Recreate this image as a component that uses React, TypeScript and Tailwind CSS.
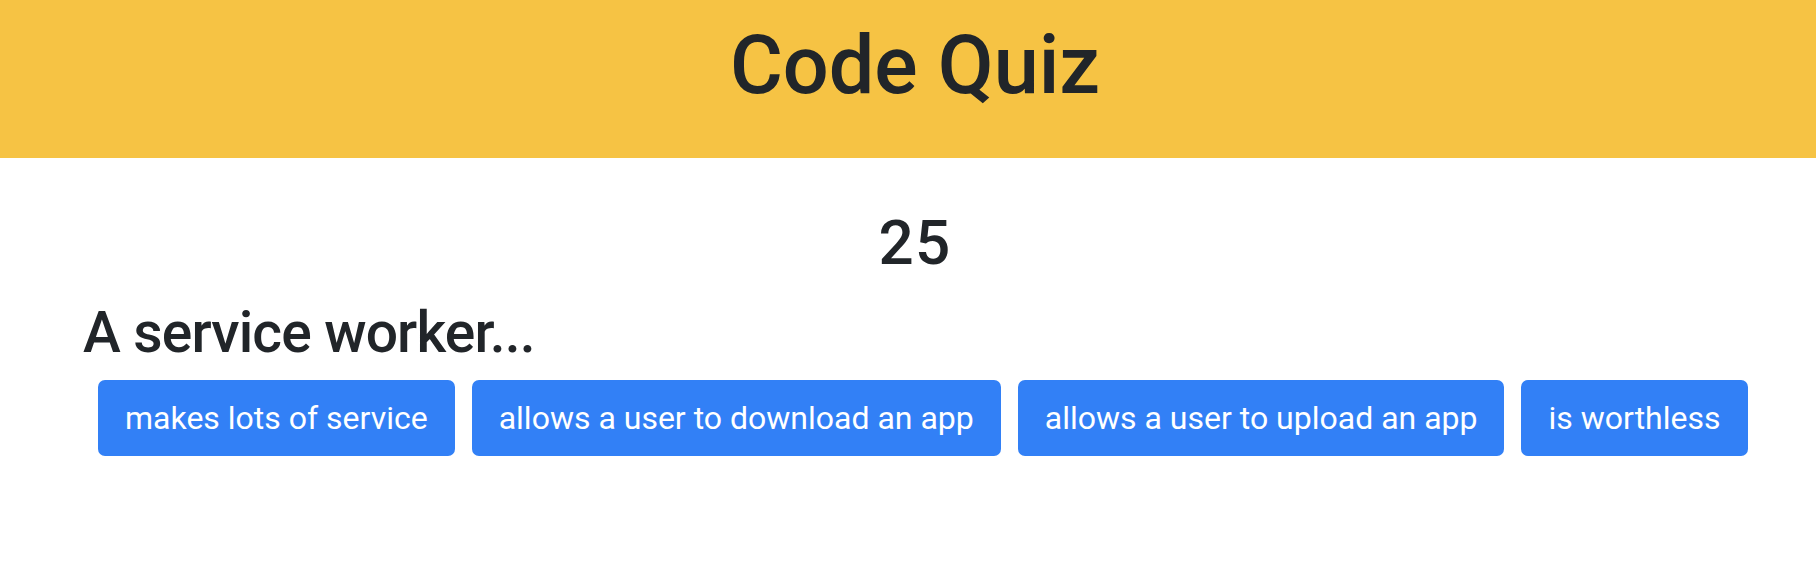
export default function App() {
  const answers = [
    "makes lots of service",
    "allows a user to download an app",
    "allows a user to upload an app",
    "is worthless",
  ];
  return (
    <div className="min-h-[576px] bg-white text-[#212529]" style={{ fontFamily: "Roboto, 'Noto Sans', sans-serif" }}>
      <header className="h-[158px] bg-[#f6c344] flex justify-center pt-[17px]">
        <h1 className="text-[81px] leading-[1.2] font-medium pl-[14px]">Code Quiz</h1>
      </header>
      <main className="px-[83px]">
        <div className="text-center text-[62px] leading-[1.2] font-medium mt-[48px] pl-[14px] tracking-[0.02em]">25</div>
        <h2 className="text-[57px] leading-[1.2] font-medium mt-[19px] tracking-[-0.015em]">A service worker...</h2>
        <div className="flex gap-[17px] pl-[15px] mt-[12px]">
          {answers.map((a) => (
            <button key={a} className="h-[76px] px-[27px] rounded-[7px] bg-[#3280f6] text-white text-[32px] leading-none whitespace-nowrap">
              {a}
            </button>
          ))}
        </div>
      </main>
    </div>
  );
}
